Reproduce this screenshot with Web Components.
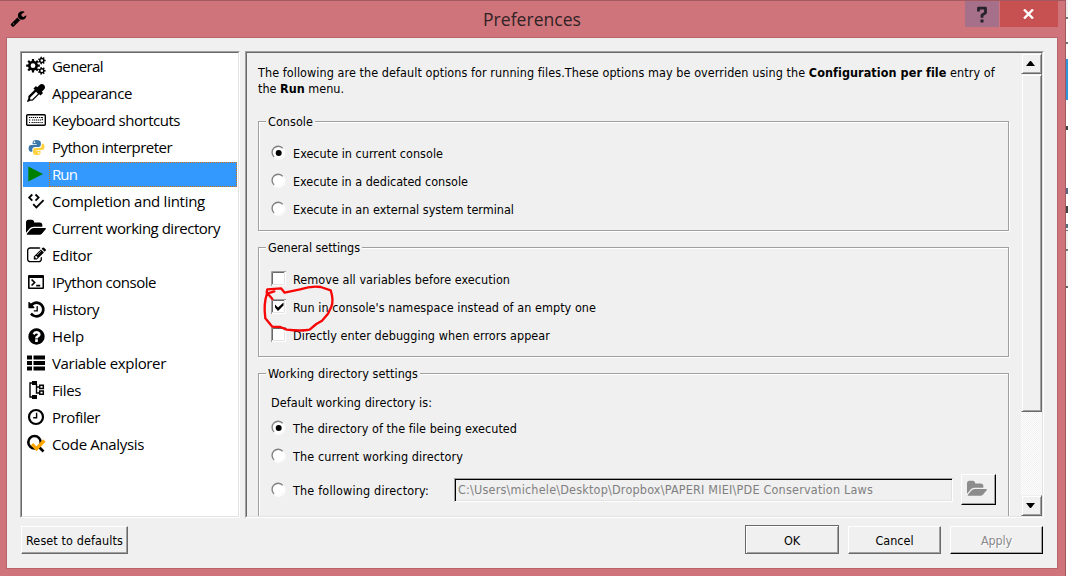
<!DOCTYPE html>
<html lang="en"><head><meta charset="utf-8"><title>Preferences</title>
<style>
html,body{margin:0;height:100%;overflow:hidden;background:#fff}
body{font:12.5px/16px "DejaVu Sans Condensed","DejaVu Sans",sans-serif;font-stretch:condensed;color:#000}
</style></head><body>
<pref-window></pref-window>
<script>
const define=(name,html,ready)=>customElements.define(name,class extends HTMLElement{
  connectedCallback(){
    if(this.shadowRoot)return;
    const t=document.createElement('template');t.innerHTML=html;
    this.attachShadow({mode:'open'}).append(t.content.cloneNode(true));
    if(ready)ready(this,this.shadowRoot);
  }
});

/* Gear outline with n teeth around (cx,cy). */
function gear(cx,cy,R,r,hole,n){
  let d='';
  for(let i=0;i<n;i++)[[-.30,r],[-.2,R],[.2,R],[.30,r]].forEach(([o,q])=>{
    const a=(i+o)*2*Math.PI/n+.0;
    d+=(d?'L':'M')+(cx+q*Math.cos(a)).toFixed(2)+' '+(cy+q*Math.sin(a)).toFixed(2);
  });
  return d+`ZM${cx-hole} ${cy}a${hole} ${hole} 0 1 0 ${2*hole} 0a${hole} ${hole} 0 1 0 ${-2*hole} 0Z`;
}
const fa=(d,x=0,y=0,w=1792)=>`<svg viewBox="${x} ${y} ${w} 1792"><path d="${d}"/></svg>`;
const sv=b=>`<svg viewBox="0 0 20 20">${b}</svg>`;
const icons={
 wrench:fa("M448 1472q0-26-19-45t-45-19-45 19-19 45 19 45 45 19 45-19 19-45zm644-420l-682 682q-37 37-90 37-52 0-91-37l-106-108q-38-36-38-90 0-53 38-91l681-681q39 98 114.5 173.5t173.5 114.5zm634-435q0 39-23 106-47 134-164.5 217.5t-258.5 83.5q-185 0-316.5-131.5t-131.5-316.5 131.5-316.5 316.5-131.5q58 0 121.5 16.5t107.5 46.5q16 11 16 28t-16 28l-293 169v224l193 107q5-3 79-48.5t135.5-81 70.5-35.5q15 0 23.5 10t8.5 25z"),
 cogs:sv(`<path fill-rule="evenodd" d="${gear(7,9.7,6.9,5,2.4,8)}${gear(15.8,4.5,3.9,2.8,1.3,7)}${gear(15.8,14.8,3.9,2.8,1.3,7)}"/>`),
 dropper:fa("M1698 94q94 94 94 226.5t-94 225.5l-225 223 104 104q10 10 10 23t-10 23l-210 210q-10 10-23 10t-23-10l-105-105-603 603q-37 37-90 37h-203l-256 128-64-64 128-256v-203q0-53 37-90l603-603-105-105q-10-10-10-23t10-23l210-210q10-10 23-10t23 10l104 104 223-225q93-94 225.5-94t226.5 94zm-1186 1442l576-576-192-192-576 576v192h192z",0,0),
 keyboard:sv(`<rect x=".7" y="4.7" width="18.6" height="10.6" rx="1" fill="none" stroke="#000" stroke-width="1.4"/><path d="M3 7.5h9M13 7.5h4M3 10h2M6 10h9M3 12.5h1M5.5 12.5h9M15.5 12.5h1.5M16.3 7v4" stroke="#000" stroke-width="1.2" stroke-dasharray="1.3 .7" fill="none"/>`),
 python:sv(`<path fill="#3b77a8" d="M9.8 2C7 2 5.900 3 5.900 4.700V6.700H10.200V7.400H4.200C2.500 7.400 1.700 9 1.700 11s.9 3.400 2.400 3.400H5.600V12.200c0-1.600 1.300-2.800 2.800-2.800h4c1.300 0 2.200-1 2.200-2.300V4.700C14.600 3 12.600 2 9.800 2zM7.900 3.500a.9.900 0 1 1 0 1.800.9.900 0 0 1 0-1.800z" fill-rule="evenodd"/><path fill="#ffd343" fill-rule="evenodd" d="M10.400 18c2.800 0 3.900-1 3.900-2.700V13.300H10V12.600h6c1.700 0 2.500-1.600 2.500-3.600s-.9-3.300-2.400-3.300H15.400V7.800c0 1.600-1.300 2.800-2.800 2.800h-4c-1.300 0-2.200 1-2.200 2.300v2.400C6.400 17 7.600 18 10.400 18zM12.300 14.700a.9.900 0 1 1 0 1.800.9.900 0 0 1 0-1.800z"/>`),
 run:sv(`<path fill="#008000" d="M2.300 2.400L17 9.900 2.300 17.400z"/>`),
 lint:sv(`<path d="M6.300 3.500L3.200 6.600l3.100 3.100M9.500 3.500l3.100 3.100-3.100 3.100M7.200 13.200l3.200 3.200 7.200-7.200" fill="none" stroke="#000" stroke-width="1.800"/>`),
 folder:fa("M1879 952q0 31-31 66l-336 396q-43 51-120.5 86.500t-143.500 35.500h-1088q-34 0-60.500-13t-26.500-43q0-31 31-66l336-396q43-51 120.500-86.500t143.500-35.500h1088q34 0 60.500 13t26.500 43zm-343-344v160h-832q-94 0-197 47.500t-164 119.500l-337 396-5 6q0-4-.5-12.500t-.5-12.500v-960q0-92 66-158t158-66h320q92 0 158 66t66 158v32h544q92 0 158 66t66 158z",0,0,1880),
 edit:fa("M888 1184l116-116-152-152-116 116v56h96v96h56zm440-720q-16-16-33 1l-350 350q-17 17-1 33t33-1l350-350q17-17 1-33zm80 594v190q0 119-84.500 203.500t-203.500 84.500h-832q-119 0-203.500-84.500t-84.500-203.500v-832q0-119 84.500-203.500t203.500-84.500h832q63 0 117 25 15 7 18 23 3 17-9 29l-49 49q-14 14-32 8-23-6-45-6h-832q-66 0-113 47t-47 113v832q0 66 47 113t113 47h832q66 0 113-47t47-113v-126q0-13 9-22l64-64q15-15 35-7t20 29zm-96-738l288 288-672 672h-288v-288zm444 132l-92 92-288-288 92-92q28-28 68-28t68 28l152 152q28 28 28 68t-28 68z"),
 console:sv(`<path fill-rule="evenodd" d="M3 3h14q1 0 1 1v12q0 1-1 1H3q-1 0-1-1V4q0-1 1-1zM3.600 6v9.500h12.900V6z"/><path d="M5.600 7.500l3 3-3 3M10.200 13.600h4" fill="none" stroke="#000" stroke-width="1.700"/>`),
 history:fa("M1664 896q0 156-61 298t-164 245-245 164-298 61q-172 0-327-72.500t-264-204.500q-7-10-6.500-22.500t8.500-20.500l137-138q10-9 25-9 16 2 23 12 73 95 179 147t225 52q104 0 198.500-40.500t163.500-109.500 109.500-163.500 40.500-198.500-40.500-198.500-109.500-163.500-163.500-109.500-198.500-40.500q-98 0-188 35.500t-160 101.500l137 138q31 30 14 69-17 40-59 40h-448q-26 0-45-19t-19-45v-448q0-42 40-59 39-17 69 14l130 129q107-101 244.500-156.500t284.500-55.500q156 0 298 61t245 164 164 245 61 298zm-640-288v448q0 14-9 23t-23 9h-320q-14 0-23-9t-9-23v-64q0-14 9-23t23-9h224v-352q0-14 9-23t23-9h64q14 0 23 9t9 23z"),
 help:fa("M1024 1376v-192q0-14-9-23t-23-9h-192q-14 0-23 9t-9 23v192q0 14 9 23t23 9h192q14 0 23-9t9-23zm256-672q0-88-55.500-163t-138.500-116-170-41q-243 0-371 213-15 24 8 42l132 100q7 6 19 6 16 0 25-12 53-68 86-92 34-24 86-24 48 0 85.500 26t37.500 59q0 38-20 61t-68 45q-63 28-115.500 86.500t-52.500 125.500v36q0 14 9 23t23 9h192q14 0 23-9t9-23q0-19 21.500-49.500t54.500-49.500q32-18 49-28.500t46-35 44.500-48 28-60.500 12.500-81zm384 192q0 209-103 385.500t-279.500 279.500-385.500 103-385.500-103-279.500-279.500-103-385.500 103-385.500 279.500-279.500 385.500-103 385.500 103 279.500 279.500 103 385.500z"),
 list:sv(`<path d="M1 2.500h5v4H1zM7.500 2.500H19v4H7.500zM1 8h5v4H1zM7.500 8H19v4H7.500zM1 13.500h5v4H1zM7.500 13.500H19v4H7.500z"/>`),
 tree:sv(`<path d="M7 3H4v14h4M10.500 4v9h3M10.500 7h3" fill="none" stroke="#000" stroke-width="1.400"/><path d="M6 1h5v4H6zM6 15h5v4H6z"/><path d="M13.700 5.200h3.600v3.300h-3.600zM13.700 11h3.600v3.300h-3.600z" fill="none" stroke="#000" stroke-width="1.500"/>`),
 clock:sv(`<circle cx="10" cy="10" r="7" fill="none" stroke="#000" stroke-width="2.200"/><path d="M10.600 5.800v5H7.200" fill="none" stroke="#000" stroke-width="1.400"/>`),
 analysis:sv(`<circle cx="8.500" cy="8.200" r="6.200" fill="none" stroke="#000" stroke-width="2.600"/><path d="M13 13l4.500 4.500" stroke="#000" stroke-width="2.600"/><path d="M6 10.100l4.500 4.700L18.300 6.500" fill="none" stroke="#ffa500" stroke-width="3.300"/>`)
};
define('ui-icon','<style>:host{display:block;width:20px;height:20px;flex:none}svg{display:block;width:100%;height:100%;fill:currentColor}</style>',(e,r)=>{
  r.append(document.createRange().createContextualFragment(icons[e.getAttribute('name')]));
});

/* A single line whose tracking is adjusted to span the given width. */
define('ui-text','<style>:host{display:inline-block;white-space:nowrap;flex:none}span{display:inline-block;white-space:pre}</style><span><slot></slot></span>',(e,r)=>{
  const w=+e.getAttribute('width'),s=r.querySelector('span');
  if(!w)return;
  s.style.letterSpacing=(w-s.getBoundingClientRect().width)/e.textContent.length+'px';
  e.style.width=w+'px';
});

define('title-bar',`<style>
:host{display:grid;grid-template-columns:472px 1fr 93px;height:36px;padding:0 7px 0 10px;color:#2f2226}
ui-icon{width:17px;height:17px;margin-top:9px}
.t{font:17.500px/22px "Open Sans",sans-serif;margin-top:7px;padding-left:1px}
.b{display:grid;grid-template-columns:34px 58px;gap:1px;height:26px}
.b div{display:flex;align-items:center;justify-content:center;background:#c75050}
.b .q{background:#a66f8a}svg{display:block}
</style><ui-icon name="wrench" style="color:#000"></ui-icon><div class="t"><ui-text width="98">Preferences</ui-text></div>
<div class="b"><div class="q"><svg width="12" height="17" viewBox="0 0 12 17"><path d="M2.500 5.500V2.200h7v4.600L6 9.200v2.600" fill="none" stroke="#25222a" stroke-width="2.800" stroke-linejoin="round"/><path d="M4.500 13.500h3v3h-3z" fill="#25222a"/></svg></div>
<div><svg width="12" height="10" viewBox="0 0 12 10"><path d="M1 .5l9 9M10 .5l-9 9" stroke="#fff" stroke-width="2.400"/></svg></div></div>`);

define('nav-item',`<style>
:host{display:grid;grid-template-columns:26px 1fr;height:25px;font:15px/25px "Open Sans",sans-serif}
ui-icon{margin:2px 0 0 3px}
.l{padding-left:3px;box-sizing:border-box;height:25px}
:host([selected]){background:#39f;color:#fff}
:host([selected]) .l{border:1px dotted #d27000;padding-left:2px;line-height:23px}
</style><ui-icon></ui-icon><div class="l"><slot></slot></div>`,(e,r)=>{
  const i=document.createElement('ui-icon');i.setAttribute('name',e.getAttribute('icon'));
  const s=e.getAttribute('size');if(s){i.style.cssText=`width:${s}px;height:${s}px;margin:${2+(20-s)/2}px 0 0 ${3+(20-s)/2}px`}
  r.querySelector('ui-icon').replaceWith(i);
});

define('sunken-frame',`<style>:host{display:block;box-sizing:border-box;border:1px solid;border-color:#a0a0a0 #fff #fff #a0a0a0}
div{box-sizing:border-box;height:100%;border:1px solid;border-color:#696969 #e3e3e3 #e3e3e3 #696969;overflow:hidden}</style><div><slot></slot></div>`);

define('option-row',`<style>
:host{display:grid;grid-template-columns:22px auto;height:28px;align-items:center;justify-content:start}
svg{display:block}
::slotted(*){margin-top:2px}
</style><svg width="16" height="16"></svg><slot></slot>`,(e,r)=>{
  const on=e.hasAttribute('checked'),s=r.querySelector('svg');
  s.innerHTML=e.getAttribute('kind')==='check'
  ?`<path d="M0 0h15v15H0z" fill="#fff"/><path d="M.5 15V.5H15" fill="none" stroke="#a0a0a0"/><path d="M1.500 14V1.500H14" fill="none" stroke="#696969"/><path d="M1 13.500h12.500V1" fill="none" stroke="#e3e3e3"/>${on?'<path d="M4 5.500l3 3 5.500-5v3l-5.500 5.500-3-3.500z"/>':''}`
  :`<circle cx="7.500" cy="7.700" r="5.500" fill="#fff"/><path d="M3.200 12A6.100 6.100 0 1 1 11.800 3.400" fill="none" stroke="#808080" stroke-width="1.300"/><path d="M11.800 3.400A6.100 6.100 0 1 1 3.200 12" fill="none" stroke="#fff" stroke-width="1.300"/>${on?'<circle cx="7.700" cy="8" r="3"/>':''}`;
});

define('group-box',`<style>
:host{display:block;position:relative;box-sizing:border-box;width:751px;border:1px solid #a0a0a0;box-shadow:1px 1px #fff,inset 1px 1px #fff;padding-left:12px}
.h{position:absolute;left:7px;top:-8px;padding:0 2px;background:#f0f0f0;height:17px}
</style><div class="h"><slot name="title"></slot></div><slot></slot>`);

define('push-button',`<style>
:host{display:flex;align-items:center;justify-content:center;box-sizing:border-box;width:93px;height:28px;border:1px solid;border-color:#fff #696969 #696969 #fff;box-shadow:inset -1px -1px #a0a0a0}
:host([default]){width:94px;height:29px;border-color:#696969;box-shadow:inset 1px 1px #fff,inset -1px -1px #a0a0a0}
:host([dark]){border-right-color:#000;border-bottom-color:#000}
:host([off]){color:#8a8a8a;text-shadow:1px 1px #fff}
::slotted(ui-text){margin-top:2px}
</style><slot></slot>`);

define('scroll-bar',`<style>
:host{display:grid;grid-template-rows:21px 338px 1fr 21px;height:463px;width:21px;background:repeating-conic-gradient(#fff 0 25%,#f0f0f0 0 50%) 0 0/2px 2px}
.p{box-sizing:border-box;border:1px solid;border-color:#f0f0f0 #696969 #696969 #f0f0f0;box-shadow:inset 1px 1px #fff,inset -1px -1px #a0a0a0;background:#f0f0f0;display:flex;align-items:center;justify-content:center;padding:0 2px 1px 0}
</style><div class="p"><svg width="9" height="5"><path d="M4 0h1L9 5H0z"/></svg></div><div class="p"></div><div></div><div class="p"><svg width="9" height="5"><path d="M0 0h9L5 5H4z"/></svg></div>`);

define('run-page',`<style>
:host{display:grid;grid-template-columns:1fr 21px;height:463px;overflow:hidden}
.c{padding:12px 0 0 11px;height:451px;overflow:hidden}
.intro{height:32px;margin-bottom:24px}.intro div{height:16px}
group-box+group-box{margin-top:16px}
.def{padding-top:21px;height:19px}
.dir{display:grid;grid-template-columns:183px 499px 35px;column-gap:0;height:31px;margin-top:4px;align-items:center}
.field{box-sizing:border-box;width:499px;height:24px;border:1px solid;border-color:#a0a0a0 #fff #fff #a0a0a0;box-shadow:inset 1px 1px #000,inset -1px -1px #e3e3e3;color:#808080;padding:3px 0 0 3px}
push-button{width:35px;height:31px;margin-left:8px}push-button ui-icon{color:#8c8c8c;margin:-2px 3px 0 0}
</style><div class="c">
<div class="intro"><div><ui-text width="736">The following are the default options for running files.These options may be overriden using the <b>Configuration per file</b> entry of</ui-text></div><div><ui-text width="86">the <b>Run</b> menu.</ui-text></div></div>
<group-box style="height:110px;padding-top:17px"><ui-text slot="title" width="45">Console</ui-text>
<option-row checked><ui-text width="150">Execute in current console</ui-text></option-row>
<option-row><ui-text width="175">Execute in a dedicated console</ui-text></option-row>
<option-row><ui-text width="221">Execute in an external system terminal</ui-text></option-row></group-box>
<group-box style="height:110px;padding-top:17px"><ui-text slot="title" width="92">General settings</ui-text>
<option-row kind="check"><ui-text width="217">Remove all variables before execution</ui-text></option-row>
<option-row kind="check" checked><ui-text width="303">Run in console's namespace instead of an empty one</ui-text></option-row>
<option-row kind="check"><ui-text width="257">Directly enter debugging when errors appear</ui-text></option-row></group-box>
<group-box style="height:170px"><ui-text slot="title" width="150">Working directory settings</ui-text>
<div class="def"><ui-text width="161">Default working directory is:</ui-text></div>
<option-row checked><ui-text width="224">The directory of the file being executed</ui-text></option-row>
<option-row><ui-text width="170">The current working directory</ui-text></option-row>
<div class="dir"><option-row><ui-text width="136">The following directory:</ui-text></option-row><div class="field"><ui-text width="415">C:\\Users\\michele\\Desktop\\Dropbox\\PAPERI MIEI\\PDE Conservation Laws</ui-text></div><push-button dark><ui-icon name="folder"></ui-icon></push-button></div>
</group-box></div><scroll-bar></scroll-bar>`);

define('red-scribble',`<style>:host{position:absolute;left:240px;top:230px;width:100px;height:105px;pointer-events:none}svg{display:block}</style>
<svg width="100" height="105" viewBox="0 0 300 315"><path d="M97 207L80 187 82 178 123 175 134 188 180 178Q215 167 242 171L272 181Q282 211 274 230L264 251 246 272 229 282 209 299Q185 304 140 299L121 291 97 290 76 265Q70 222 81 191L103 184" fill="none" stroke="#f80505" stroke-width="7" stroke-linejoin="round" stroke-linecap="round"/></svg>`);

define('pref-window',`<style>
:host{display:grid;grid-template-columns:1066px 2px;height:576px;position:relative}
.w{box-sizing:border-box;height:576px;background:#cf747a;border-top:1px solid #a25960;border-right:1px solid #a25960}
.body{box-sizing:border-box;margin-left:6px;width:1052px;height:532px;border:1px solid #b9636b;background:#f0f0f0;padding:13px 0 0 13px}
.main{display:grid;grid-template-columns:220px 799px;column-gap:5px;height:467px}
.nav{display:grid;row-gap:2px;padding:1px 1px 0}
.foot{display:grid;grid-template-columns:107px 1fr 94px 93px 93px;column-gap:9px;align-items:end;height:29px;margin:7px 14px 0 1px}
.side{background:linear-gradient(#eee 0 17px,#777 17px 19px,#fff 19px 42px,#777 42px 44px,#fff 44px 59px,#3194dc 59px 100px,#fff 100px 126px,#444 126px 130px,#fff 130px 188px,#5f6b86 188px 194px,#fff 194px 206px,#444 206px 213px,#fff 213px 224px,#587080 224px 228px,#f0f0f0 228px 230px,#777 230px 231px,#f0f0f0 231px 249px,#777 249px 251px,#f0f0f0 251px 286px,#666 286px 288px,#fff 288px)}
</style><div class="w"><title-bar></title-bar><div class="body">
<div class="main"><sunken-frame style="background:#fff"><div class="nav">
<nav-item icon="cogs"><ui-text width="51">General</ui-text></nav-item>
<nav-item icon="dropper" size="18"><ui-text width="80">Appearance</ui-text></nav-item>
<nav-item icon="keyboard"><ui-text width="128">Keyboard shortcuts</ui-text></nav-item>
<nav-item icon="python" size="19"><ui-text width="120">Python interpreter</ui-text></nav-item>
<nav-item icon="run"><ui-text width="25">Run</ui-text></nav-item>
<nav-item icon="lint"><ui-text width="153">Completion and linting</ui-text></nav-item>
<nav-item icon="folder"><ui-text width="168">Current working directory</ui-text></nav-item>
<nav-item icon="edit" size="19"><ui-text width="40">Editor</ui-text></nav-item>
<nav-item icon="console"><ui-text width="104">IPython console</ui-text></nav-item>
<nav-item icon="history" size="19"><ui-text width="47">History</ui-text></nav-item>
<nav-item icon="help" size="19"><ui-text width="32">Help</ui-text></nav-item>
<nav-item icon="list"><ui-text width="114">Variable explorer</ui-text></nav-item>
<nav-item icon="tree"><ui-text width="29">Files</ui-text></nav-item>
<nav-item icon="clock"><ui-text width="48">Profiler</ui-text></nav-item>
<nav-item icon="analysis"><ui-text width="92">Code Analysis</ui-text></nav-item>
</div></sunken-frame><sunken-frame><run-page></run-page></sunken-frame></div>
<div class="foot"><push-button style="width:107px"><ui-text width="97">Reset to defaults</ui-text></push-button><i></i><push-button default><ui-text width="16">OK</ui-text></push-button><push-button><ui-text width="38">Cancel</ui-text></push-button><push-button off dark><ui-text width="31">Apply</ui-text></push-button></div>
</div></div><div class="side"></div><red-scribble></red-scribble>`,(e,r)=>{
  r.querySelector('nav-item[icon="run"]').setAttribute('selected','');
});
</script></body></html>
